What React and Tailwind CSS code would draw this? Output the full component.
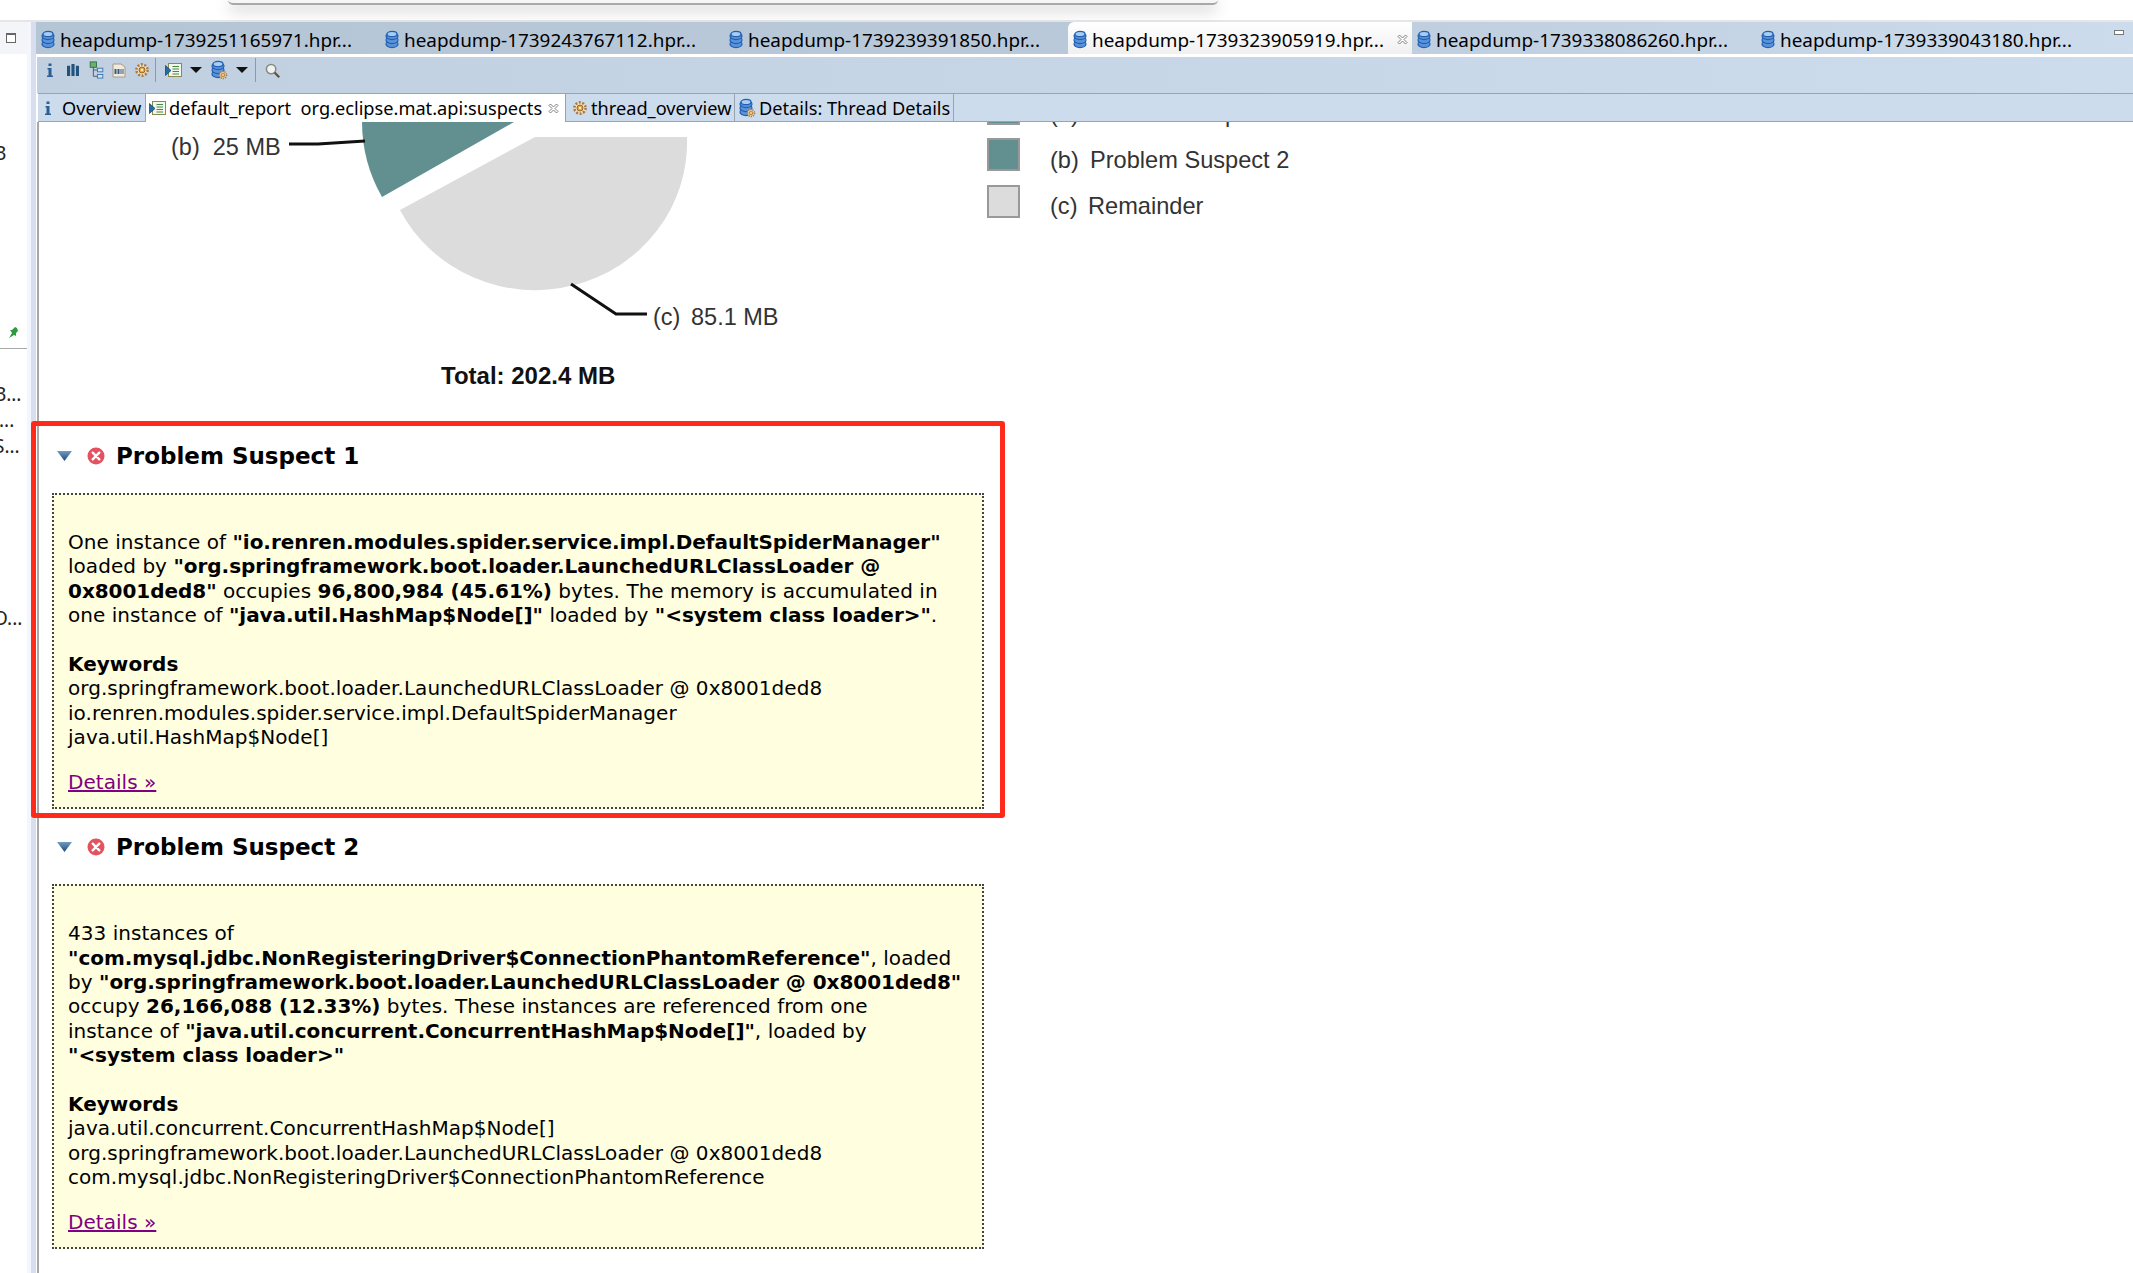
const HEAP_TABS = [
  { name: 'heapdump-1739251165971.hpr...' },
  { name: 'heapdump-1739243767112.hpr...' },
  { name: 'heapdump-1739239391850.hpr...' },
  { name: 'heapdump-1739323905919.hpr...', active: true },
  { name: 'heapdump-1739338086260.hpr...' },
  { name: 'heapdump-1739339043180.hpr...' },
];

const DbIcon = () => (
  <svg width="14" height="20" viewBox="0 0 14 20" className="shrink-0">
    {[14, 10, 6].map((y) => (
      <ellipse key={y} cx="7" cy={y} rx="6" ry="3.6" fill="#5b93d8" stroke="#1f5fb4" strokeWidth="1.2" />
    ))}
    <ellipse cx="7" cy="4" rx="5" ry="2.6" fill="#a9cdf0" stroke="#1f5fb4" strokeWidth="1.2" />
  </svg>
);

const GearIcon = ({ size = 16 }) => (
  <svg width={size} height={size} viewBox="0 0 16 16" className="shrink-0">
    <circle cx="8" cy="8" r="5.6" fill="#f3e2c4" stroke="#a87c48" strokeWidth="2.6" strokeDasharray="2 1.5" />
    <circle cx="8" cy="8" r="3" fill="#e8a63c" stroke="#94682c" />
    <circle cx="8" cy="8" r="1.1" fill="#fff" />
  </svg>
);

const DbGearIcon = () => (
  <span className="relative block">
    <DbIcon />
    <span className="absolute -right-[3px] bottom-0"><GearIcon size={10} /></span>
  </span>
);

const ReportIcon = () => (
  <svg width="17" height="17" viewBox="0 0 17 17" className="shrink-0">
    <rect x="3.5" y="1.5" width="13" height="13" fill="#f4f6ea" stroke="#8a8a50" />
    <path d="M7.5 4.5h6.5M7.5 7h6.5M7.5 9.5h6.5M7.5 12h6.5" stroke="#3f8a4a" />
    <path d="M0.5 3.5l5.5 5-5.5 5z" fill="#1f6ea8" stroke="#123e66" strokeWidth="0.7" />
  </svg>
);

const InfoGlyph = () => (
  <svg width="8" height="16" viewBox="0 0 8 16" className="shrink-0">
    <path d="M2.5 1.5h3v2.5h-3zM1.5 6h4v7.5h1.5V15H1v-1.5h1.5V7.5h-1z" fill="#2a5f96" />
  </svg>
);

const CloseIcon = () => (
  <svg width="11" height="11" viewBox="0 0 11 11" className="shrink-0">
    <path d="M1 2.5L2.5 1 5.5 4 8.5 1 10 2.5 7 5.5 10 8.5 8.5 10 5.5 7 2.5 10 1 8.5 4 5.5z" fill="#fff" stroke="#707070" strokeWidth="0.9" />
  </svg>
);

const Dropdown = () => (
  <svg width="12" height="6" viewBox="0 0 12 6" className="shrink-0"><path d="M0 0h12L6 6z" fill="#111" /></svg>
);

const Sep = () => <span className="block h-6 w-px bg-[#8f9aa6]" />;

const Toolbar = () => (
  <div className="ml-[1px] flex h-9 items-center bg-gradient-to-r from-[#c0d0e0] via-[#c6d6e6] to-[#cddcec] pb-[10px] pl-[9px]">
    <InfoGlyph />
    <svg width="12" height="12" viewBox="0 0 13 13" className="ml-[13px]"><path d="M0 2h3.4v11H0zM4.8 0h3.4v13H4.8zM9.6 2H13v11H9.6z" fill="#24527e" /></svg>
    <svg width="15" height="18" viewBox="0 0 16 20" className="ml-[10px]">
      <rect x="1" y="1" width="7" height="6" fill="#6db06d" stroke="#2f6f3f" />
      <rect x="9" y="8" width="6" height="4" fill="#cfe2f5" stroke="#3a76b0" />
      <rect x="9" y="15" width="6" height="4" fill="#cfe2f5" stroke="#3a76b0" />
      <path d="M4.5 7v10H9M4.5 10H9" fill="none" stroke="#456" />
    </svg>
    <svg width="14" height="15" viewBox="0 0 14 15" className="ml-[8px]">
      <path d="M1 1h8l4 3v10H1z" fill="#f0ebe0" stroke="#a89a80" />
      <path d="M2.5 6h2v5h-2zM5.5 6h2v5h-2zM8.5 6h1v5h-1zM10.5 6h1v5h-1z" fill="#345a80" />
    </svg>
    <span className="ml-[8px]"><GearIcon /></span>
    <span className="ml-[5px]"><Sep /></span>
    <span className="ml-[9px]"><ReportIcon /></span>
    <span className="ml-[8px]"><Dropdown /></span>
    <span className="ml-[9px]"><DbGearIcon /></span>
    <span className="ml-[11px]"><Dropdown /></span>
    <span className="ml-[7px]"><Sep /></span>
    <svg width="15" height="15" viewBox="0 0 16 16" className="ml-[9px]">
      <circle cx="6.5" cy="6.5" r="5" fill="#eef3f8" stroke="#8a8a7a" strokeWidth="1.6" />
      <path d="M10.2 10.2l5 5" stroke="#6a5030" strokeWidth="2.4" />
    </svg>
  </div>
);

const EDITOR_TABS = [
  { label: 'Overview', icon: <InfoGlyph />, width: 'w-[108px]', pad: 'pl-[6px]', gap: 'gap-[10px]' },
  { label: 'default_report  org.eclipse.mat.api:suspects', icon: <ReportIcon />, width: 'w-[420px]', pad: 'pl-[3px]', gap: 'gap-[3px]', active: true },
  { label: 'thread_overview', icon: <GearIcon />, width: 'w-[169px]', pad: 'pl-[6px]', gap: 'gap-[3px]' },
  { label: 'Details: Thread Details', icon: <DbGearIcon />, width: 'w-[219px]', pad: 'pl-[4px]', gap: 'gap-[6px]' },
];

const ErrorIcon = () => (
  <svg width="18" height="18" viewBox="0 0 18 18" className="shrink-0">
    <circle cx="9" cy="9" r="8.5" fill="#e2525f" />
    <path d="M5.7 5.7l6.6 6.6M12.3 5.7l-6.6 6.6" stroke="#fff" strokeWidth="2.4" strokeLinecap="round" />
  </svg>
);

const Suspect = ({ title, children, keywords, className }) => (
  <section className={className}>
    <div className="ml-[18px] flex h-[26px] items-center">
      <svg width="15" height="10" viewBox="0 0 15 10" className="shrink-0">
        <defs>
          <linearGradient id="tri" x1="0" y1="0" x2="0" y2="1">
            <stop offset="0" stopColor="#6f9cc4" />
            <stop offset="1" stopColor="#1f4a78" />
          </linearGradient>
        </defs>
        <path d="M0 0h15L7.5 10z" fill="url(#tri)" />
      </svg>
      <span className="ml-[15px]"><ErrorIcon /></span>
      <h2 className="ml-[11px] text-[23px] font-bold leading-[26px] text-black">{title}</h2>
    </div>
    <div className="ml-[13px] mt-[24px] w-[932px] border-2 border-dotted border-[#444] bg-[#ffffe0] pb-[13px] pl-[14px] pt-[35px] text-[20px] leading-[24.45px] tracking-[0.04px] text-black [&_b]:tracking-[-0.04px]">
      <p>{children}</p>
      <p className="mt-[24px] font-bold">Keywords</p>
      {keywords.map((k) => <p key={k}>{k}</p>)}
      <p className="mt-[20px]"><a href="#details" className="text-[#800080] underline">Details »</a></p>
    </div>
  </section>
);

export default function App() {
  return (
    <div className="relative h-[1273px] w-[2133px] overflow-hidden bg-white font-['DejaVu_Sans',sans-serif]">
      {/* dialog bottom edge peeking in from above */}
      <div className="h-[22px] border-b-2 border-[#e6e6e6] bg-white">
        <div className="ml-[228px] h-[5px] w-[990px] rounded-b-[6px] border-b-2 border-[#a8a8a8] bg-[#f6f6f6] shadow-[0_4px_16px_rgba(0,0,0,0.32)]" />
      </div>

      <div className="flex h-[1251px]">
        {/* collapsed left view */}
        <aside className="flex w-[36px] shrink-0 font-['Noto_Sans',sans-serif] text-[19px] text-[#222]">
          <div className="w-[27px] overflow-hidden bg-white">
            <div className="flex h-[32px] items-center bg-[#f3f5f9] pl-[6px]">
              <span className="h-[10px] w-[10px] border border-t-2 border-[#666] bg-white" />
            </div>
            <p className="-ml-[6px] mt-[90px] leading-none">B</p>
            <svg width="10" height="12" viewBox="0 0 10 12" className="ml-[8px] mt-[164px]"><path d="M9 1L7 0 4 3 2 3 4 6 1 11 6 8 8 9 8 6 10 4z" fill="#2f9a3f" /></svg>
            <div className="mt-[9px] h-px bg-[#a8a8a8]" />
            <p className="-ml-[6px] mt-[36px] whitespace-nowrap leading-none">B...</p>
            <p className="-ml-[1px] mt-[7px] leading-none">...</p>
            <p className="-ml-[6px] mt-[7px] whitespace-nowrap leading-none">S...</p>
            <p className="-ml-[7px] mt-[153px] whitespace-nowrap leading-none">O...</p>
          </div>
          <div className="w-[4px] bg-[#f4f6fd]" />
          <div className="w-[5px] bg-[#d8deee]" />
        </aside>

        <main className="min-w-0 flex-1">
          {/* heap dump tabs */}
          <div className="flex h-[32px] bg-gradient-to-r from-[#b4c5d6] via-[#b9c9da] to-[#cddcec] font-['Noto_Sans',sans-serif] text-[18.9px] leading-[24px]">
            {HEAP_TABS.map((t) => (
              <div
                key={t.name}
                className={`relative flex h-[32px] w-[344px] shrink-0 items-center gap-[5px] pl-[5px] pt-[3px] text-black ${t.active ? 'rounded-tl-[6px] bg-gradient-to-b from-white to-[#f0f0f0]' : ''}`}
              >
                <DbIcon />
                <span className="whitespace-nowrap">{t.name}</span>
                {t.active && <span className="absolute right-[4px] flex"><CloseIcon /></span>}
              </div>
            ))}
            <span className="ml-[14px] mt-[8px] h-[5px] w-[10px] border border-[#777] bg-white" />
          </div>
          <div className="h-[3px] bg-white" />
          <Toolbar />

          {/* editor tabs */}
          <div className="ml-[2px] flex h-[29px] border-y border-[#9aa4b0] bg-[#cddcec] font-['Noto_Sans',sans-serif] text-[18.2px] leading-[22px] text-black">
            {EDITOR_TABS.map((t) => (
              <div key={t.label} className={`flex shrink-0 items-center whitespace-pre border-r border-[#9aa4b0] ${t.width} ${t.pad} ${t.gap} ${t.active ? 'relative -mb-px bg-white' : ''}`}>
                {t.icon}
                <span>{t.label}</span>
                {t.active && <span className="absolute right-[6px] flex"><CloseIcon /></span>}
              </div>
            ))}
          </div>

          <div className="ml-[1px] h-[1151px] overflow-hidden border-l-2 border-[#a8a8a8]">
            {/* pie chart image, cut off by the scroll position */}
            <svg width="2094" height="300" viewBox="39 122 2094 300" className="block font-['Liberation_Sans',sans-serif]">
              <path d="M514 122 L382 197 A152 152 0 0 1 362 122 Z" fill="#629090" />
              <path d="M535 137 L687 137 A152 148 0 0 1 400 210 Z" fill="#dcdcdc" />
              <path d="M289 144 H318 L365 141" fill="none" stroke="#111" strokeWidth="3" />
              <path d="M571 284 L616 314 H647" fill="none" stroke="#111" strokeWidth="3" />
              <text x="171" y="155" fontSize="23.5" fill="#333" xmlSpace="preserve">(b)  25 MB</text>
              <text x="653" y="325" fontSize="23.5" fill="#333">(c)<tspan x="691">85.1 MB</tspan></text>
              <text x="441" y="384" fontSize="24" fontWeight="700" fill="#111">Total: 202.4 MB</text>
              <rect x="988" y="92" width="31" height="32" fill="#629090" stroke="#999" strokeWidth="2" />
              <rect x="988" y="139" width="31" height="31" fill="#629090" stroke="#999" strokeWidth="2" />
              <rect x="988" y="186" width="31" height="31" fill="#dcdcdc" stroke="#999" strokeWidth="2" />
              <text x="1050" y="122" fontSize="23.6" fill="#333">(a)<tspan x="1090">Problem Suspect 1</tspan></text>
              <text x="1050" y="168" fontSize="23.6" fill="#333">(b)<tspan x="1090">Problem Suspect 2</tspan></text>
              <text x="1050" y="214" fontSize="23.6" fill="#333">(c)<tspan x="1088">Remainder</tspan></text>
            </svg>

            <Suspect
              title="Problem Suspect 1"
              className="pt-[21px]"
              keywords={[
                'org.springframework.boot.loader.LaunchedURLClassLoader @ 0x8001ded8',
                'io.renren.modules.spider.service.impl.DefaultSpiderManager',
                'java.util.HashMap$Node[]',
              ]}
            >
              One instance of <b>"io.renren.modules.spider.service.impl.DefaultSpiderManager"</b><br />
              loaded by <b>"org.springframework.boot.loader.LaunchedURLClassLoader @</b><br />
              <b>0x8001ded8"</b> occupies <b>96,800,984 (45.61%)</b> bytes. The memory is accumulated in<br />
              one instance of <b>"java.util.HashMap$Node[]"</b> loaded by <b>"&lt;system class loader&gt;"</b>.
            </Suspect>

            <Suspect
              title="Problem Suspect 2"
              className="pt-[25px]"
              keywords={[
                'java.util.concurrent.ConcurrentHashMap$Node[]',
                'org.springframework.boot.loader.LaunchedURLClassLoader @ 0x8001ded8',
                'com.mysql.jdbc.NonRegisteringDriver$ConnectionPhantomReference',
              ]}
            >
              433 instances of<br />
              <b>"com.mysql.jdbc.NonRegisteringDriver$ConnectionPhantomReference"</b>, loaded<br />
              by <b>"org.springframework.boot.loader.LaunchedURLClassLoader @ 0x8001ded8"</b><br />
              occupy <b>26,166,088 (12.33%)</b> bytes. These instances are referenced from one<br />
              instance of <b>"java.util.concurrent.ConcurrentHashMap$Node[]"</b>, loaded by<br />
              <b>"&lt;system class loader&gt;"</b>
            </Suspect>
          </div>
        </main>
      </div>

      {/* red annotation drawn over the screenshot */}
      <div className="absolute left-[31px] top-[421px] h-[397px] w-[974px] rounded-[3px] border-[5px] border-[#ff2a1a]" />
    </div>
  );
}
